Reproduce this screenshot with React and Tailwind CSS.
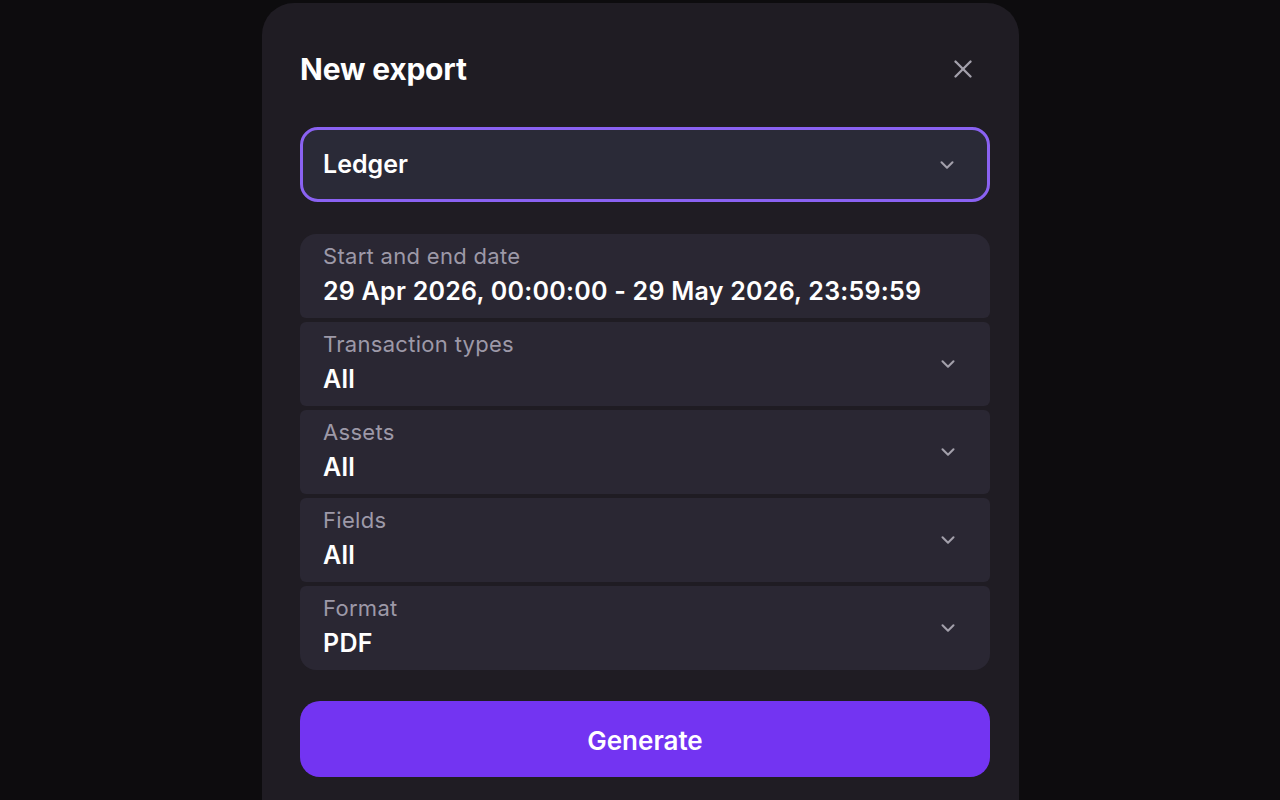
import { ChevronDown, X } from 'lucide-react';

const fields = [
  { label: 'Transaction types', value: 'All' },
  { label: 'Assets', value: 'All' },
  { label: 'Fields', value: 'All' },
  { label: 'Format', value: 'PDF' },
];

const App = () => {
  return (
    <div
      className="h-[800px] w-[1280px] overflow-hidden bg-[#0d0c0e] pt-[3px]"
      style={{ fontFamily: 'Inter, "Noto Sans", sans-serif' }}
    >
      <div className="ml-[262px] h-[830px] w-[757px] rounded-[32px] bg-[#1f1c23] pl-[38px] pr-[29px] pt-[46px]">
        {/* Header */}
        <div className="flex h-[40px] items-center justify-between">
          <h1 className="text-[30px] font-bold tracking-[-0.2px] text-white">New export</h1>
          <button className="mr-[12px] text-[#a3a0ab]">
            <X className="h-[30px] w-[30px]" strokeWidth={1.9} />
          </button>
        </div>

        {/* Export type select */}
        <div className="mt-[38px] flex h-[75px] items-center justify-between rounded-[18px] border-[3px] border-[#8a62f2] bg-[#2a2a37] pl-[20px] pr-[29px]">
          <span className="text-[25px] font-semibold text-white">Ledger</span>
          <ChevronDown className="h-[22px] w-[22px] text-[#a3a0ab]" strokeWidth={2.25} />
        </div>

        {/* Options */}
        <div className="mt-[32px] flex flex-col gap-[4px]">
          <div className="flex h-[84px] flex-col rounded-t-[16px] rounded-b-[6px] bg-[#2a2733] px-[23px] pt-[8px]">
            <span className="text-[22px] leading-[28px] tracking-[0.3px] text-[#9d99a8]">Start and end date</span>
            <span className="mt-[6px] text-[25px] font-semibold leading-[30px] tracking-[0.25px] text-white">
              29 Apr 2026, 00:00:00 - 29 May 2026, 23:59:59
            </span>
          </div>
          {fields.map((f, i) => (
            <div
              key={f.label}
              className={`flex h-[84px] items-center justify-between bg-[#2a2733] pl-[23px] pr-[31px] ${
                i === fields.length - 1 ? 'rounded-t-[6px] rounded-b-[16px]' : 'rounded-[6px]'
              }`}
            >
              <div className="flex h-full flex-col pt-[8px]">
                <span className="text-[22px] leading-[28px] tracking-[0.3px] text-[#9d99a8]">{f.label}</span>
                <span className="mt-[6px] text-[25px] font-semibold leading-[30px] tracking-[0.25px] text-white">
                  {f.value}
                </span>
              </div>
              <ChevronDown className="h-[22px] w-[22px] text-[#a3a0ab]" strokeWidth={2.25} />
            </div>
          ))}
        </div>

        {/* Generate */}
        <button className="mt-[31px] flex h-[76px] w-full items-center justify-center rounded-[20px] bg-[#7334f2] pt-[3px] text-[26px] font-semibold text-white">
          Generate
        </button>
      </div>
    </div>
  );
};

export default App;
